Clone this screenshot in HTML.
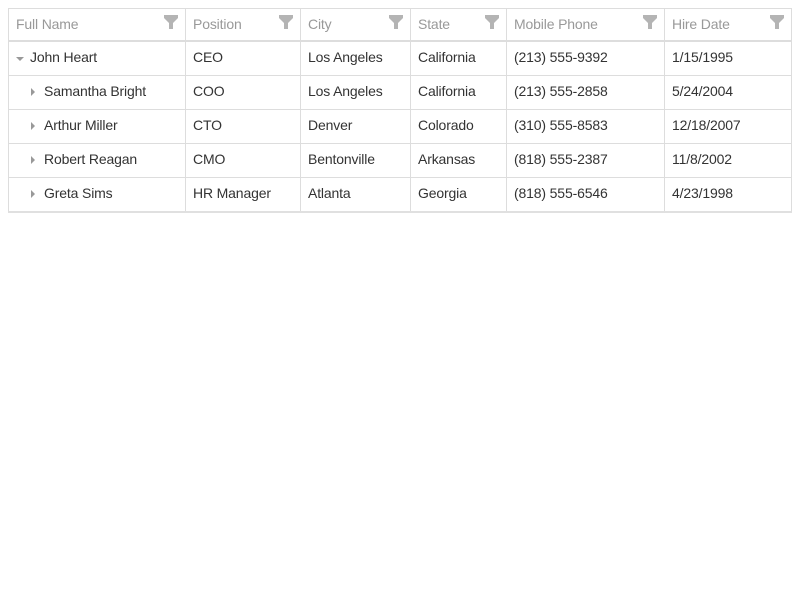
<!DOCTYPE html>
<html><head><style>
body{margin:0;width:800px;height:600px;background:#fff;font-family:"Liberation Sans",sans-serif;font-size:14px;color:#333;position:relative;overflow:hidden;letter-spacing:-0.15px}
.a{position:absolute}
.vl{position:absolute;width:1px;background:#ddd;top:9px;height:202px}
.hl{position:absolute;left:9px;width:782px;height:1px;background:#ddd}
.h{position:absolute;top:16px;color:#999;font-size:14px}
.t{position:absolute;font-size:14px;color:#333}
.f{position:absolute;top:15px}
</style></head><body>
<div class="a" style="left:8px;top:8px;width:782px;height:202px;border:1px solid #ddd;border-bottom:2px solid #e0e0e0"></div>
<div class="hl" style="top:40px;height:2px;background:#ddd"></div>
<div class="hl" style="top:75px"></div>
<div class="hl" style="top:109px"></div>
<div class="hl" style="top:143px"></div>
<div class="hl" style="top:177px"></div>
<div class="vl" style="left:185px"></div>
<div class="vl" style="left:300px"></div>
<div class="vl" style="left:410px"></div>
<div class="vl" style="left:506px"></div>
<div class="vl" style="left:664px"></div>

<div class="h" style="left:16px">Full Name</div>
<div class="h" style="left:193px">Position</div>
<div class="h" style="left:308px">City</div>
<div class="h" style="left:418px">State</div>
<div class="h" style="left:514px">Mobile Phone</div>
<div class="h" style="left:672px">Hire Date</div>

<svg class="f" style="left:164px" width="14" height="14" viewBox="0 0 14 14"><path d="M0 0H14V3L9 8V14H5V8L0 3Z" fill="#b4b4b4"/></svg>
<svg class="f" style="left:279px" width="14" height="14" viewBox="0 0 14 14"><path d="M0 0H14V3L9 8V14H5V8L0 3Z" fill="#b4b4b4"/></svg>
<svg class="f" style="left:389px" width="14" height="14" viewBox="0 0 14 14"><path d="M0 0H14V3L9 8V14H5V8L0 3Z" fill="#b4b4b4"/></svg>
<svg class="f" style="left:485px" width="14" height="14" viewBox="0 0 14 14"><path d="M0 0H14V3L9 8V14H5V8L0 3Z" fill="#b4b4b4"/></svg>
<svg class="f" style="left:643px" width="14" height="14" viewBox="0 0 14 14"><path d="M0 0H14V3L9 8V14H5V8L0 3Z" fill="#b4b4b4"/></svg>
<svg class="f" style="left:770px" width="14" height="14" viewBox="0 0 14 14"><path d="M0 0H14V3L9 8V14H5V8L0 3Z" fill="#b4b4b4"/></svg>

<svg class="a" style="left:16px;top:57px" width="8" height="4"><path d="M0 0H8L4 4Z" fill="#999"/></svg>
<svg class="a" style="left:31px;top:88px" width="4" height="8"><path d="M0 0V8L4 4Z" fill="#999"/></svg>
<svg class="a" style="left:31px;top:122px" width="4" height="8"><path d="M0 0V8L4 4Z" fill="#999"/></svg>
<svg class="a" style="left:31px;top:156px" width="4" height="8"><path d="M0 0V8L4 4Z" fill="#999"/></svg>
<svg class="a" style="left:31px;top:190px" width="4" height="8"><path d="M0 0V8L4 4Z" fill="#999"/></svg>

<div class="t" style="left:30px;top:49px">John Heart</div>
<div class="t" style="left:193px;top:49px">CEO</div>
<div class="t" style="left:308px;top:49px">Los Angeles</div>
<div class="t" style="left:418px;top:49px">California</div>
<div class="t" style="left:514px;top:49px">(213) 555-9392</div>
<div class="t" style="left:672px;top:49px">1/15/1995</div>

<div class="t" style="left:44px;top:83px">Samantha Bright</div>
<div class="t" style="left:193px;top:83px">COO</div>
<div class="t" style="left:308px;top:83px">Los Angeles</div>
<div class="t" style="left:418px;top:83px">California</div>
<div class="t" style="left:514px;top:83px">(213) 555-2858</div>
<div class="t" style="left:672px;top:83px">5/24/2004</div>

<div class="t" style="left:44px;top:117px">Arthur Miller</div>
<div class="t" style="left:193px;top:117px">CTO</div>
<div class="t" style="left:308px;top:117px">Denver</div>
<div class="t" style="left:418px;top:117px">Colorado</div>
<div class="t" style="left:514px;top:117px">(310) 555-8583</div>
<div class="t" style="left:672px;top:117px">12/18/2007</div>

<div class="t" style="left:44px;top:151px">Robert Reagan</div>
<div class="t" style="left:193px;top:151px">CMO</div>
<div class="t" style="left:308px;top:151px">Bentonville</div>
<div class="t" style="left:418px;top:151px">Arkansas</div>
<div class="t" style="left:514px;top:151px">(818) 555-2387</div>
<div class="t" style="left:672px;top:151px">11/8/2002</div>

<div class="t" style="left:44px;top:185px">Greta Sims</div>
<div class="t" style="left:193px;top:185px">HR Manager</div>
<div class="t" style="left:308px;top:185px">Atlanta</div>
<div class="t" style="left:418px;top:185px">Georgia</div>
<div class="t" style="left:514px;top:185px">(818) 555-6546</div>
<div class="t" style="left:672px;top:185px">4/23/1998</div>
</body></html>
